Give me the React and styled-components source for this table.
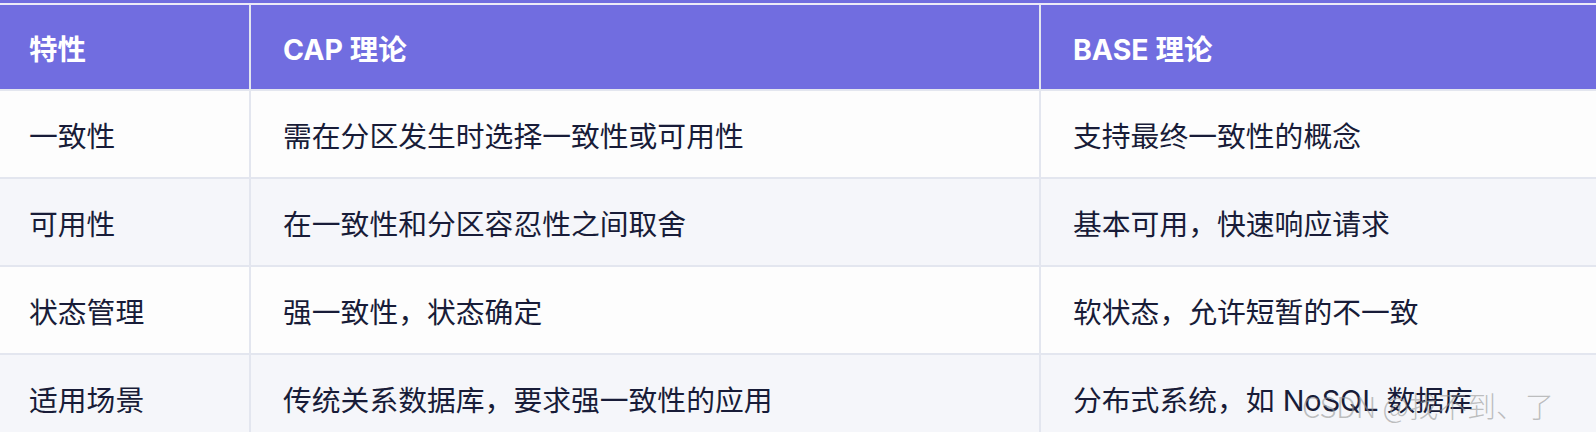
import React from 'react'
import styled, { createGlobalStyle } from 'styled-components';

const Global = createGlobalStyle`
body{
  margin:0;
  background:#fdfdfd;
  font-family: Inter, "Noto Sans CJK SC", sans-serif;
  overflow:hidden;
}
`

const Page = styled.div`
position:relative;
width:1596px;
height:432px;
overflow:hidden;
`
const TopStrip = styled.div`
height:3px;
background:#716de0;
border-bottom:2px solid #eceaf8;
`
const Grid = styled.div`
display:grid;
grid-template-columns:249px 788px 1fr;
grid-auto-rows:86px;
grid-template-rows:84px;
gap:2px;
background:#e3e6ef;
`
const HeadCell = styled.div`
display:flex;
align-items:center;
padding-left:${(props)=>props.first ? "29px" : "32px"};
background:#716de0;
color:#fff;
font-size:28.5px;
font-weight:700;
`
const Cell = styled.div`
display:flex;
align-items:center;
padding-left:${(props)=>props.first ? "29px" : "32px"};
background:${(props)=>props.stripe ? "#f5f6fa" : "#fdfdfd"};
color:#181c38;
font-size:28.8px;
font-weight:400;
white-space:nowrap;
`
const Watermark = styled.div`
position:absolute;
right:42px;
bottom:6px;
font-family:"Noto Sans CJK SC", sans-serif;
font-size:29px;
font-weight:300;
color:rgba(150,150,150,0.6);
pointer-events:none;
`

const heads = ["特性", "CAP 理论", "BASE 理论"]
const rows = [
  ["一致性", "需在分区发生时选择一致性或可用性", "支持最终一致性的概念"],
  ["可用性", "在一致性和分区容忍性之间取舍", "基本可用，快速响应请求"],
  ["状态管理", "强一致性，状态确定", "软状态，允许短暂的不一致"],
  ["适用场景", "传统关系数据库，要求强一致性的应用", "分布式系统，如 NoSQL 数据库"],
]

const App = () => {
  return (
    <Page>
      <Global />
      <TopStrip />
      <Grid>
        {heads.map((h, i) => (
          <HeadCell key={h} first={i === 0}>{h}</HeadCell>
        ))}
        {rows.map((r, ri) => r.map((c, ci) => (
          <Cell key={ri + "-" + ci} first={ci === 0} stripe={ri % 2 === 1}>{c}</Cell>
        )))}
      </Grid>
      <Watermark>CSDN @找不到、了</Watermark>
    </Page>
  )
}

export default App;
